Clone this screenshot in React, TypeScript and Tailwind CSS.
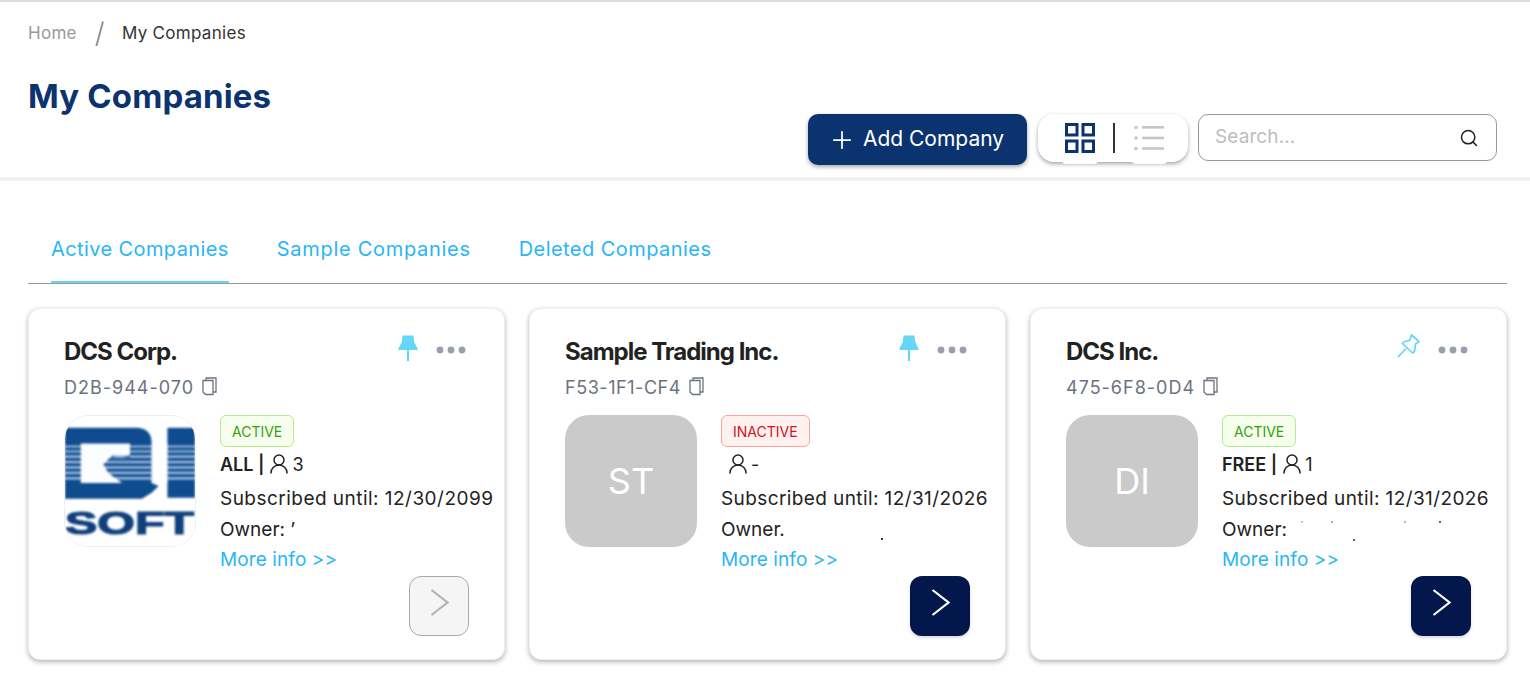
import { Plus, Search, UserRound } from "lucide-react";

type Company = {
  name: string;
  code: string;
  status: "ACTIVE" | "INACTIVE";
  plan?: string;
  users: string;
  until: string;
  initials?: string;
  owner: string;
  specks: { x: number; y: number; color: string }[];
  pinned: boolean;
  disabled?: boolean;
  codeTracking: string;
  untilTracking: string;
};

const companies: Company[] = [
  {
    name: "DCS Corp.",
    code: "D2B-944-070",
    status: "ACTIVE",
    plan: "ALL",
    users: "3",
    until: "12/30/2099",
    owner: "Owner: ’",
    specks: [],
    pinned: true,
    disabled: true,
    codeTracking: "tracking-[1px]",
    untilTracking: "tracking-[0.47px]",
  },
  {
    name: "Sample Trading Inc.",
    code: "F53-1F1-CF4",
    status: "INACTIVE",
    users: "-",
    until: "12/31/2026",
    initials: "ST",
    owner: "Owner.",
    specks: [{ x: 160, y: 24, color: "#333333" }],
    pinned: true,
    codeTracking: "tracking-[0.55px]",
    untilTracking: "tracking-[0.4px]",
  },
  {
    name: "DCS Inc.",
    code: "475-6F8-0D4",
    status: "ACTIVE",
    plan: "FREE",
    users: "1",
    until: "12/31/2026",
    initials: "DI",
    owner: "Owner:",
    specks: [
      { x: 79, y: 7, color: "#cccccc" },
      { x: 109, y: 7, color: "#aaaaaa" },
      { x: 131, y: 25, color: "#666666" },
      { x: 182, y: 7, color: "#bbbbbb" },
      { x: 217, y: 7, color: "#666666" },
    ],
    pinned: false,
    codeTracking: "tracking-[1px]",
    untilTracking: "tracking-[0.4px]",
  },
];

const CopyIcon = () => (
  <svg width="15" height="19" viewBox="0 0 15 19" fill="none" stroke="#6b7280" strokeWidth="1.3" className="shrink-0 -mt-[2px]">
    <path d="M4 3V1h10v14h-3" />
    <path d="M1 3.5h10v14H3.5L1 15z" />
  </svg>
);

const PinSolid = () => (
  <svg width="20" height="26" viewBox="0 0 20 26">
    <path d="M4.5 0.5h11l0.7 6.5 3.3 6.5v1.5H0.5v-1.5L3.8 7z" fill="#65d6f7" />
    <rect x="8.9" y="14" width="2.2" height="12" fill="#65d6f7" />
  </svg>
);

const PinOutline = () => (
  <svg width="23" height="24" viewBox="0 0 23 24" fill="none" stroke="#65d6f7" strokeWidth="1.7" strokeLinejoin="round">
    <path d="M14.5 1 22 7.5 18.5 10 17.5 17.5 15.5 19 5.5 9.5 7.5 7.5 12.5 6.5z" />
    <path d="M9 14.5 1 23" />
  </svg>
);

const Dots = () => (
  <svg width="30" height="8" viewBox="0 0 30 8" fill="#9a9fae">
    <circle cx="4" cy="4" r="3.4" />
    <circle cx="15" cy="4" r="3.4" />
    <circle cx="26" cy="4" r="3.4" />
  </svg>
);

const Chevron = () => (
  <svg width="19" height="27" viewBox="0 0 19 27" fill="none" stroke="currentColor" strokeWidth="2.2" className="mb-[7px]">
    <path d="M1.5 1 17.5 13.5 1.5 26" />
  </svg>
);

const GridIcon = () => (
  <svg width="30" height="30" viewBox="0 0 30 30" fill="none" stroke="#0b3370" strokeWidth="3">
    <rect x="1.5" y="1.5" width="10.5" height="10.5" />
    <rect x="18" y="1.5" width="10.5" height="10.5" />
    <rect x="1.5" y="18" width="10.5" height="10.5" />
    <rect x="18" y="18" width="10.5" height="10.5" />
  </svg>
);

const ListIcon = () => (
  <svg width="30" height="26" viewBox="0 0 30 26" fill="#c4c7c4">
    <circle cx="2" cy="2.5" r="1.8" />
    <circle cx="2" cy="13" r="1.8" />
    <circle cx="2" cy="23.5" r="1.8" />
    <rect x="8" y="1" width="22" height="2.6" />
    <rect x="8" y="11.7" width="22" height="2.6" />
    <rect x="8" y="22.2" width="22" height="2.6" />
  </svg>
);

// blurry company logo from the first card
const QiLogo = () => (
  <svg viewBox="0 0 132 132" className="w-full h-full" style={{ filter: "blur(0.9px)" }}>
    <rect width="132" height="132" fill="#fff" />
    <path d="M0 12H72Q88 12 88 28V68L95 71 88 78 78 84H0z" fill="#0f4c8f" />
    <rect x="104" y="12" width="28" height="71" fill="#0f4c8f" />
    <g fill="#a4bfe0">
      <rect x="0" y="30" width="132" height="2" />
      <rect x="0" y="35" width="132" height="2" />
      <rect x="0" y="40" width="132" height="2.5" />
      <rect x="0" y="45.5" width="132" height="2.5" />
      <rect x="0" y="51" width="132" height="2.5" />
      <rect x="0" y="56.5" width="132" height="2.5" />
      <rect x="0" y="62" width="132" height="2.5" />
    </g>
    <rect x="88" y="28" width="16" height="40" fill="#fff" />
    <path d="M16 28H66V40H48L39 49 44 58 58 68H16z" fill="#fcfdff" />
    <path d="M48 40 53 44 60 42 66 40V46H46z" fill="#2d62a2" />
    <text x="0" y="120" fill="#0f3f7c" stroke="#0f3f7c" strokeWidth="1.2" fontFamily="Liberation Sans, sans-serif" fontWeight="700" fontSize="32" textLength="131" lengthAdjust="spacingAndGlyphs">SOFT</text>
  </svg>
);

const CompanyCard = ({ company }: { company: Company }) => {
  const active = company.status === "ACTIVE";
  return (
    <div className="w-[477px] h-[352px] shrink-0 bg-white rounded-xl border border-[#eeeeee] shadow-[0_2px_5px_rgba(0,0,0,0.3)] pt-[25px] pl-[35px] pr-[35px]">
      <div className="flex items-start justify-between h-[36px]">
        <div className="text-[24px] leading-[36px] font-bold text-[#222222] tracking-[-1px]">{company.name}</div>
        <div className="flex items-start gap-[18px] pr-[3px]">
          <div className={company.pinned ? "mt-[1px]" : "-ml-[1px]"}>{company.pinned ? <PinSolid /> : <PinOutline />}</div>
          <div className="mt-[12px]">
            <Dots />
          </div>
        </div>
      </div>
      <div className={`flex items-center gap-[8px] h-[27px] mt-[4px] text-[18px] text-[#6b7280] ${company.codeTracking}`}>
        {company.code}
        <CopyIcon />
      </div>
      <div className="flex mt-[14px]">
        <div className="w-[132px] h-[132px] rounded-[24px] overflow-hidden shrink-0">
          {company.initials ? (
            <div className="w-full h-full bg-[#cacaca] flex items-center justify-center text-white text-[36px]">{company.initials}</div>
          ) : (
            <div className="w-full h-full rounded-[24px] overflow-hidden border border-[#eeeeee]">
              <QiLogo />
            </div>
          )}
        </div>
        <div className="ml-[24px] text-[#222222] text-[19px]">
          <div
            className={
              active
                ? "w-fit h-[32px] px-[11px] flex items-center rounded-[6px] border border-[#b7eb8f] bg-[#f6ffed] text-[14px] text-[#389e0d]"
                : "w-fit h-[32px] px-[11px] flex items-center rounded-[6px] border border-[#ffa39e] bg-[#fff1f0] text-[14px] text-[#cf1322]"
            }
          >
            {company.status}
          </div>
          <div className="flex items-center h-[34px] text-[18px]">
            {company.plan ? <span className="font-semibold mr-[3px]">{company.plan} |</span> : <span className="w-[5px]" />}
            <UserRound size={24} strokeWidth={1.5} className="mr-[1px]" />
            <span>{company.users}</span>
          </div>
          <div className={`h-[30px] leading-[30px] whitespace-nowrap mt-[3px] ${company.untilTracking}`}>Subscribed until: {company.until}</div>
          <div className="relative h-[31px] leading-[31px]">
            {company.owner}
            {company.specks.map((s) => (
              <span key={s.x} className="absolute w-[2px] h-[2px]" style={{ left: s.x, top: s.y, backgroundColor: s.color }} />
            ))}
          </div>
          <div className="h-[30px] leading-[30px] text-[#29b6f6] tracking-[0.1px]">More info &gt;&gt;</div>
        </div>
      </div>
      <div className="flex justify-end mt-[1px]">
        <button
          className={
            company.disabled
              ? "w-[60px] h-[60px] rounded-xl flex items-center justify-center bg-[#f5f5f5] border border-[#aaaaaa] text-[#b3b3b3]"
              : "w-[60px] h-[60px] rounded-xl flex items-center justify-center bg-[#03174d] text-white shadow-[0_2px_3px_rgba(0,0,0,0.15)]"
          }
        >
          <Chevron />
        </button>
      </div>
    </div>
  );
};

const App = () => {
  return (
    <div className="w-[1530px] h-[673px] overflow-hidden bg-white font-['Inter',sans-serif]">
      <header className="h-[181px] border-t-2 border-t-[#dddddd] border-b-4 border-b-[#f0f0f0] pl-[28px] pr-[33px]">
        <nav className="flex items-center h-[34px] mt-[15px] text-[17px] tracking-[0.3px]">
          <span className="text-[#999999]">Home</span>
          <span className="ml-[18px] mr-[17px] -mt-[2px] text-[#888888] text-[28px] font-light">/</span>
          <span className="text-[#333333]">My Companies</span>
        </nav>
        <div className="flex justify-between items-start">
          <h1 className="text-[33px] leading-[48px] mt-[21px] font-bold tracking-[0.15px] text-[#0b3370]">My Companies</h1>
          <div className="flex items-start mt-[63px]">
            <button className="w-[219px] h-[51px] pb-[2px] rounded-[10px] bg-[#0b3370] text-white text-[21px] flex items-center justify-center gap-[7px] shadow-[0_2px_4px_rgba(0,0,0,0.35)]">
              <Plus size={28} strokeWidth={1.5} className="-ml-[3px] mt-[2px]" />
              Add Company
            </button>
            <div className="relative ml-[11px] w-[150px] h-[48px] rounded-[16px] bg-white shadow-[0_2px_4px_rgba(0,0,0,0.35)] flex items-center pl-[27px]">
              <GridIcon />
              <span className="w-[2px] h-[30px] bg-[#333333] ml-[18px] mr-[19px]" />
              <ListIcon />
              <span className="absolute left-[24px] -bottom-[2px] w-[36px] h-[4px] rounded-b-lg bg-white" />
              <span className="absolute left-[94px] -bottom-[2px] w-[35px] h-[4px] rounded-b-lg bg-white" />
            </div>
            <div className="ml-[10px] w-[299px] h-[47px] rounded-[10px] border border-[#999999] flex items-center justify-between pl-[16px] pr-[17px]">
              <span className="text-[19px] tracking-[0.1px] text-[#bdbdbd]">Search...</span>
              <Search size={20} strokeWidth={1.8} className="text-[#222222]" />
            </div>
          </div>
        </div>
      </header>
      <main className="pl-[28px] pr-[23px]">
        <div className="flex gap-[48px] h-[103px] pl-[23px] pt-[48px] border-b border-b-[#999999]">
          <div className="h-[54px] leading-[40px] text-[20px] tracking-[0.4px] text-[#29b6f6] border-b-2 border-b-[#65d6f7]">Active Companies</div>
          <div className="leading-[40px] text-[20px] tracking-[0.7px] text-[#29b6f6]">Sample Companies</div>
          <div className="leading-[40px] text-[20px] tracking-[0.45px] text-[#29b6f6]">Deleted Companies</div>
        </div>
        <div className="flex gap-[24px] mt-[24px]">
          {companies.map((c) => (
            <CompanyCard key={c.code} company={c} />
          ))}
        </div>
      </main>
    </div>
  );
};

export default App;
